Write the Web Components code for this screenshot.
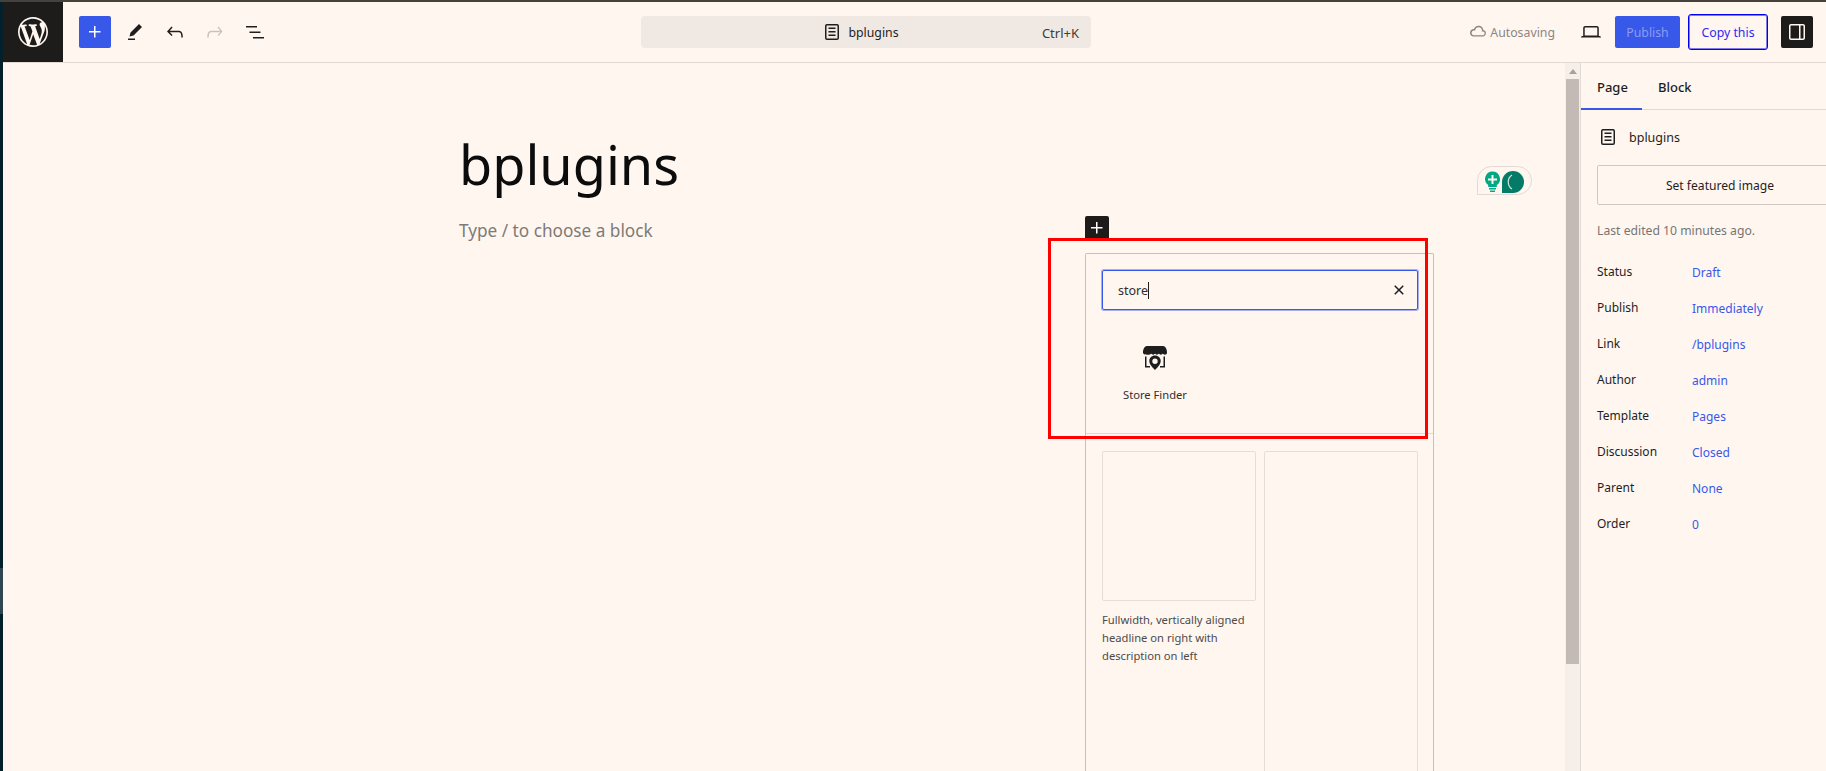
<!DOCTYPE html>
<html>
<head>
<meta charset="utf-8">
<title>bplugins</title>
<style>
  html, body { margin: 0; height: 100%; overflow: hidden; background: #fff6f0; }
  body { font: 12.3px "Noto Sans", "Open Sans", sans-serif; color: #1e1e1e; }
</style>
</head>
<body>
<wp-editor></wp-editor>

<script>
const ICONS = {
  plus: '<path d="M11 12.5V17.5H12.5V12.5H17.5V11H12.5V6H11V11H6V12.5H11Z"/>',
  pencil: '<path d="m19 7-3-3-8.5 8.5-1 4 4-1L19 7Zm-7 11.5H5V20h7v-1.5Z"/>',
  undo: '<path d="M18.3 11.7c-.6-.6-1.4-.9-2.3-.9H6.7l2.9-3.3-1.1-1-4.5 5L8.5 16l1-1-2.7-2.7H16c.5 0 .9.2 1.3.5 1 1 1 3.4 1 4.5v.3h1.5v-.2c0-1.5 0-4.3-1.5-5.7z"/>',
  redo: '<path d="M15.6 6.5l-1.1 1 2.9 3.3H8c-.9 0-1.7.3-2.3.9-1.4 1.5-1.4 4.2-1.4 5.6v.2h1.5v-.3c0-1.1 0-3.5 1-4.5.3-.3.7-.5 1.3-.5h9.2L14.5 15l1 1.1 4-4.6-3.9-5z"/>',
  list: '<path d="M3 6h11v1.5H3V6Zm3.5 5.5h11V13h-11v-1.5ZM21 17H10v1.5h11V17Z"/>',
  page: '<path d="M15.5 7.5h-7V9h7V7.5Zm-7 3.5h7v1.5h-7V11Zm7 3.5h-7V16h7v-1.5Z"/><path d="M17 4H7a2 2 0 0 0-2 2v12a2 2 0 0 0 2 2h10a2 2 0 0 0 2-2V6a2 2 0 0 0-2-2ZM7 5.5h10a.5.5 0 0 1 .5.5v12a.5.5 0 0 1-.5.5H7a.5.5 0 0 1-.5-.5V6a.5.5 0 0 1 .5-.5Z"/>',
  laptop: '<path d="M20.5 16h-.7V8c0-1.1-.9-2-2-2H6.2c-1.1 0-2 .9-2 2v8h-.7c-.8 0-1.5.7-1.5 1.5h20c0-.8-.7-1.5-1.5-1.5zM5.7 8c0-.3.2-.5.5-.5h11.6c.3 0 .5.2.5.5v7.6H5.7V8z"/>',
  drawer: '<path fill-rule="evenodd" d="M18 4H6c-1.1 0-2 .9-2 2v12c0 1.1.9 2 2 2h12c1.1 0 2-.9 2-2V6c0-1.1-.9-2-2-2zm-4 14.5H6c-.3 0-.5-.2-.5-.5V6c0-.3.2-.5.5-.5h8v13zm4.5-.5c0 .3-.2.5-.5.5h-2.5v-13H18c.3 0 .5.2.5.5v12z"/>',
  close: '<path d="M12 13.06l3.712 3.713 1.061-1.06L13.061 12l3.712-3.712-1.06-1.061L12 10.939 8.288 7.227l-1.061 1.06L10.939 12l-3.712 3.712 1.06 1.061L12 13.061z"/>',
  cloud: '<path d="M17.3 10.1c0-2.5-2.1-4.4-4.8-4.4-2.2 0-4.1 1.4-4.6 3.3h-.2C5.7 9 4 10.7 4 12.8c0 2.1 1.7 3.8 3.7 3.8h9c1.8 0 3.2-1.5 3.2-3.3.1-1.6-1.1-2.9-2.6-3.2zm-.5 5.1h-9c-1.2 0-2.2-1.1-2.2-2.3s1-2.4 2.2-2.4h1.3l.3-1.1c.4-1.3 1.7-2.2 3.2-2.2 1.8 0 3.3 1.3 3.3 2.9v1.3l1.3.2c.8.1 1.4.9 1.4 1.8-.1 1-.9 1.8-1.8 1.8z"/>',
  store: '<path d="M4 0h16c2.500 0 4 3 4 6.500 0 1.300-1 2.300-2.200 2.300-.8 0-1.600-.5-2-1.200-.4.700-1.100 1.200-2 1.200s-1.500-.5-1.900-1.200c-.4.700-1.100 1.200-1.900 1.200s-1.500-.5-1.900-1.200c-.4.700-1.100 1.200-2 1.200s-1.600-.5-2-1.200c-.4.700-1.200 1.200-2 1.200C1 8.800 0 7.800 0 6.500 0 3 1.500 0 4 0Z"/><path d="M2 10.500h1.500V20H7v1.500H2V10.500Zm20 0h-1.500V20H17v1.500h5V10.500Z"/><path fill-rule="evenodd" d="M12 9.500c-3.300 0-5.700 2.400-5.700 5.500 0 3.400 3.200 6.400 5.700 9 2.500-2.600 5.700-5.600 5.700-9 0-3.100-2.400-5.500-5.700-5.500Zm0 3a2.700 2.700 0 1 1 0 5.400 2.700 2.700 0 0 1 0-5.400Z"/>'
};

class WpIcon extends HTMLElement {
  connectedCallback() {
    const size = this.getAttribute("size") || 24;
    this.attachShadow({ mode: "open" });
    this.shadowRoot.innerHTML = `
      <style>
        :host { display: inline-flex; flex: none; }
        svg { display: block; fill: currentColor; }
      </style>
      <svg width="${size}" height="${size}" viewBox="0 0 24 24">${ICONS[this.getAttribute("name")]}</svg>`;
  }
}
customElements.define("wp-icon", WpIcon);

const topbarTemplate = document.createElement("template");
topbarTemplate.innerHTML = `
  <style>
    :host { display: flex; align-items: center; height: 60px; border-bottom: 1px solid #e3d9d3; flex: none; }
    .logo { width: 60px; height: 60px; background: #1e1c1a; color: #fff6f0; display: flex; align-items: center; justify-content: center; }
    .logo svg { width: 30px; height: 30px; fill: currentColor; display: block; }
    .tools { display: flex; align-items: center; gap: 16px; margin-left: 16px; width: 188px; }
    .add { width: 32px; height: 32px; background: #3858e9; color: #fff; border-radius: 2px; display: flex; align-items: center; justify-content: center; margin-right: -4px; }
    .redo { color: #c9c2bd; }
    .command { position: relative; margin-left: 374px; width: 450px; height: 32px; box-sizing: border-box; padding-right: 13px; background: #f0e8e3; border-radius: 4px; display: flex; align-items: center; justify-content: center; gap: 4px; color: #1e1e1e; }
    .kbd { position: absolute; right: 12px; top: 8px; font-size: 13px; line-height: 18px; color: #3c3c3c; }
    .actions { margin-left: auto; display: flex; align-items: center; padding-right: 13px; }
    .saving { display: flex; align-items: center; color: #8b8682; margin-right: 24px; }
    .publish { margin-left: 12px; width: 65px; height: 32px; background: #3858e9; color: #8a9cf2; border-radius: 2px; display: flex; align-items: center; justify-content: center; }
    .copy { margin-left: 8px; width: 78px; height: 34px; border: 1px solid #0000ee; box-shadow: inset 0 0 0 1px rgba(0, 0, 238, .5); border-radius: 3px; color: #2b2bf0; display: flex; align-items: center; justify-content: center; }
    .drawer { margin-left: 13px; width: 32px; height: 32px; background: #1e1c1a; color: #fff6f0; border-radius: 2px; display: flex; align-items: center; justify-content: center; }
  </style>
  <div class="logo"><svg viewBox="0 0 20 20"><path d="M20 10c0-5.510-4.490-10-10-10C4.480 0 0 4.490 0 10c0 5.520 4.480 10 10 10 5.510 0 10-4.480 10-10zM7.780 15.370L4.370 6.220c.550-.020 1.170-.080 1.170-.080.500-.060.440-1.130-.060-1.110 0 0-1.450.110-2.370.110-.180 0-.370 0-.580-.010C4.120 2.690 6.870 1.110 10 1.110c2.330 0 4.450.870 6.050 2.340-.680-.110-1.650.390-1.650 1.580 0 .740.450 1.360.900 2.100.350.610.550 1.360.550 2.460 0 1.490-1.400 5-1.400 5l-3.030-8.370c.540-.020.820-.170.820-.170.500-.050.440-1.250-.060-1.220 0 0-1.440.120-2.380.120-.870 0-2.330-.120-2.330-.120-.500-.030-.560 1.200-.060 1.220l.920.080 1.260 3.410zM17.410 10c.240-.640.740-1.870.430-4.250.700 1.290 1.050 2.710 1.050 4.250 0 3.290-1.730 6.240-4.400 7.780.970-2.590 1.940-5.200 2.920-7.780zM6.100 18.090C3.120 16.650 1.110 13.530 1.110 10c0-1.300.230-2.480.720-3.590C3.250 10.300 4.670 14.200 6.100 18.090zm4.030-6.630l2.580 6.980c-.860.290-1.760.450-2.710.450-.790 0-1.570-.110-2.290-.330.810-2.380 1.620-4.740 2.420-7.100z"/></svg></div>
  <div class="tools">
    <div class="add"><wp-icon name="plus"></wp-icon></div>
    <wp-icon name="pencil"></wp-icon>
    <wp-icon name="undo"></wp-icon>
    <wp-icon name="redo" class="redo"></wp-icon>
    <wp-icon name="list"></wp-icon>
  </div>
  <div class="command">
    <wp-icon name="page"></wp-icon><span>bplugins</span>
    <div class="kbd">Ctrl+K</div>
  </div>
  <div class="actions">
    <div class="saving"><wp-icon name="cloud"></wp-icon>Autosaving</div>
    <wp-icon name="laptop"></wp-icon>
    <div class="publish">Publish</div>
    <div class="copy">Copy this</div>
    <div class="drawer"><wp-icon name="drawer"></wp-icon></div>
  </div>
`;
class WpTopbar extends HTMLElement {
  constructor() {
    super();
    this.attachShadow({ mode: "open" });
    this.shadowRoot.appendChild(topbarTemplate.content.cloneNode(true));
  }
}
customElements.define("wp-topbar", WpTopbar);

const inserterTemplate = document.createElement("template");
inserterTemplate.innerHTML = `
  <style>
    :host { display: block; position: absolute; left: 1082px; top: 153px; width: 349px; }
    .toggle { width: 24px; height: 24px; background: #1e1c1a; color: #fff; display: flex; align-items: center; justify-content: center; border-radius: 2px 2px 0 0; }
    .panel { margin-top: 13px; height: 518px; box-sizing: border-box; border: 1px solid #c8c0bb; border-bottom: 0; border-radius: 2px 2px 0 0; overflow: hidden; }
    .top { height: 180px; box-sizing: border-box; padding: 16px 15px 0 16px; border-bottom: 1px solid #e0d8d2; }
    .search { height: 40px; box-sizing: border-box; border: 1px solid #3858e9; box-shadow: 0 0 0 1px rgba(56, 88, 233, .45); border-radius: 2px; display: flex; align-items: center; padding: 0 6px 0 15px; font-size: 12.5px; color: #2f2f2f; }
    .caret { width: 1px; height: 17px; background: #1e1e1e; }
    .search wp-icon { margin-left: auto; color: #1e1e1e; }
    .result { width: 106px; margin: 36px 0 0 0; display: flex; flex-direction: column; align-items: center; gap: 17px; font-size: 11.2px; line-height: 16px; color: #2f2f2f; }
    .result wp-icon { color: #1e1e1e; }
    .patterns { display: grid; grid-template-columns: 154px 154px; gap: 8px; padding: 17px 16px 0; }
    .shot { height: 150px; box-sizing: border-box; border: 1px solid #e6ddd7; border-radius: 2px; }
    .tall { height: 340px; }
    p { margin: 10px 0 0; font-size: 11.2px; line-height: 18px; color: #4b4b4b; }
  </style>
  <div class="toggle"><wp-icon name="plus"></wp-icon></div>
  <div class="panel">
    <div class="top">
      <div class="search">store<span class="caret"></span><wp-icon name="close"></wp-icon></div>
      <div class="result"><wp-icon name="store"></wp-icon><span>Store Finder</span></div>
    </div>
    <div class="patterns">
      <div>
        <div class="shot"></div>
        <p>Fullwidth, vertically aligned headline on right with description on left</p>
      </div>
      <div class="shot tall"></div>
    </div>
  </div>
`;
class WpInserter extends HTMLElement {
  constructor() {
    super();
    this.attachShadow({ mode: "open" });
    this.shadowRoot.appendChild(inserterTemplate.content.cloneNode(true));
  }
}
customElements.define("wp-inserter", WpInserter);

const canvasTemplate = document.createElement("template");
canvasTemplate.innerHTML = `
  <style>
    :host { display: block; flex: 1; position: relative; min-width: 0; }
    .title { margin: 0; padding: 71px 0 0 456px; font-size: 54px; font-weight: 400; line-height: 60px; color: #0c0c0c; }
    .hint { padding: 24px 0 0 456px; font-size: 17.2px; line-height: 26px; color: #7d7a77; }
    .tip { position: absolute; left: 1474px; top: 103px; width: 55px; height: 29px; box-sizing: border-box; border: 1px solid #e3dad5; border-radius: 15px 15px 15px 0; }
    .tip svg { display: block; position: absolute; left: 7px; top: 3px; }
    .mark { position: absolute; left: 1045px; top: 175px; width: 380px; height: 201px; box-sizing: border-box; border: 3px solid #f00; z-index: 1; }
  </style>
  <h1 class="title">bplugins</h1>
  <div class="hint">Type / to choose a block</div>
  <div class="tip">
    <svg width="45" height="24" viewBox="0 0 45 24">
      <path fill="#00a884" d="M7.500 1.500a7.500 7.500 0 0 0-4.300 13.600V17h8.600v-1.900A7.500 7.500 0 0 0 7.500 1.500ZM4 18h7v1.500H4ZM5 20.500h5V22H5Z"/>
      <path fill="#fff6f0" d="M6.500 5h2v3.500H12v2H8.500V14h-2v-3.500H3v-2h3.500Z"/>
      <path fill="#047b66" d="M28 1a11 11 0 1 1 0 22H17V12A11 11 0 0 1 28 1Z"/>
      <path fill="none" stroke="#cfe6de" stroke-width="1.200" d="M27 5c-5 3-5 11 0 14"/>
    </svg>
  </div>
  <div class="mark"></div>
  <wp-inserter></wp-inserter>
`;
class WpCanvas extends HTMLElement {
  constructor() {
    super();
    this.attachShadow({ mode: "open" });
    this.shadowRoot.appendChild(canvasTemplate.content.cloneNode(true));
  }
}
customElements.define("wp-canvas", WpCanvas);

const scrollbarTemplate = document.createElement("template");
scrollbarTemplate.innerHTML = `
  <style>
    :host { display: flex; flex-direction: column; width: 15px; flex: none; background: #f6eee9; }
    .arrow { height: 16px; display: flex; align-items: center; justify-content: center; }
    .arrow i { border: 4px solid transparent; border-top: 0; border-bottom: 5px solid #a8a09b; }
    .thumb { margin: 0 1px; height: 585px; background: #c3bab6; }
  </style>
  <div class="arrow"><i></i></div>
  <div class="thumb"></div>
`;
class WpScrollbar extends HTMLElement {
  constructor() {
    super();
    this.attachShadow({ mode: "open" });
    this.shadowRoot.appendChild(scrollbarTemplate.content.cloneNode(true));
  }
}
customElements.define("wp-scrollbar", WpScrollbar);

class WpMetaRow extends HTMLElement {
  constructor() {
    super();
    this.attachShadow({ mode: "open" });
    this.shadowRoot.innerHTML = `
      <style>
        :host { display: grid; grid-template-columns: 95px 1fr; height: 36px; line-height: 18px; font-size: 12px; color: #1e1e1e; }
        .value { color: #3858e9; margin-top: 1px; }
      </style>
      <div><slot name="label"></slot></div>
      <div class="value"><slot name="value"></slot></div>`;
  }
}
customElements.define("wp-meta-row", WpMetaRow);

const sidebarTemplate = document.createElement("template");
sidebarTemplate.innerHTML = `
  <style>
    :host { display: block; width: 245px; flex: none; border-left: 1px solid #e3d9d3; overflow: hidden; }
    .tabs { display: flex; height: 46px; border-bottom: 1px solid #e3d9d3; font-size: 13px; font-weight: 500; color: #1e1e1e; }
    .tab { height: 46px; line-height: 48px; padding: 0 16px; box-sizing: border-box; }
    .tab.on { width: 61px; box-shadow: inset 0 -2px 0 #3858e9; height: 47px; }
    .body { padding: 0 0 0 16px; }
    .head { display: flex; align-items: center; gap: 9px; height: 24px; margin-top: 15px; margin-left: -1px; font-size: 12.5px; }
    .feature { margin-top: 16px; width: 246px; height: 40px; box-sizing: border-box; border: 1px solid #cfc7c2; border-radius: 2px; display: flex; align-items: center; justify-content: center; font-size: 12.1px; }
    .edited { margin: 17px 0 23px; font-size: 12.2px; line-height: 18px; color: #757575; }
  </style>
  <div class="tabs">
    <div class="tab on">Page</div>
    <div class="tab">Block</div>
  </div>
  <div class="body">
    <div class="head"><wp-icon name="page"></wp-icon>bplugins</div>
    <div class="feature">Set featured image</div>
    <div class="edited">Last edited 10 minutes ago.</div>
    <slot></slot>
  </div>
`;
class WpSidebar extends HTMLElement {
  constructor() {
    super();
    this.attachShadow({ mode: "open" });
    this.shadowRoot.appendChild(sidebarTemplate.content.cloneNode(true));
  }
}
customElements.define("wp-sidebar", WpSidebar);

const META = [
  ["Status", "Draft"], ["Publish", "Immediately"], ["Link", "/bplugins"], ["Author", "admin"],
  ["Template", "Pages"], ["Discussion", "Closed"], ["Parent", "None"], ["Order", "0"]
];

const editorTemplate = document.createElement("template");
editorTemplate.innerHTML = `
  <style>
    :host { display: flex; flex-direction: column; height: 771px; overflow: hidden; background: #fff6f0; }
    .line { height: 2px; background: #45413d; flex: none; }
    .wrap { flex: 1; display: flex; min-height: 0; }
    .strip { width: 3px; flex: none; display: flex; flex-direction: column; background: #02212b; }
    .strip i { display: block; height: 46px; margin-top: 566px; background: #2f4650; }
    .app { flex: 1; display: flex; flex-direction: column; min-width: 0; }
    .main { flex: 1; display: flex; min-height: 0; }
  </style>
  <div class="line"></div>
  <div class="wrap">
    <div class="strip"><i></i></div>
    <div class="app">
      <wp-topbar></wp-topbar>
      <div class="main">
        <wp-canvas></wp-canvas>
        <wp-scrollbar></wp-scrollbar>
        <wp-sidebar>${META.map(([k, v]) => `<wp-meta-row><span slot="label">${k}</span><span slot="value">${v}</span></wp-meta-row>`).join("")}</wp-sidebar>
      </div>
    </div>
  </div>
`;
class WpEditor extends HTMLElement {
  constructor() {
    super();
    this.attachShadow({ mode: "open" });
    this.shadowRoot.appendChild(editorTemplate.content.cloneNode(true));
  }
}
customElements.define("wp-editor", WpEditor);
</script>
</body>
</html>
